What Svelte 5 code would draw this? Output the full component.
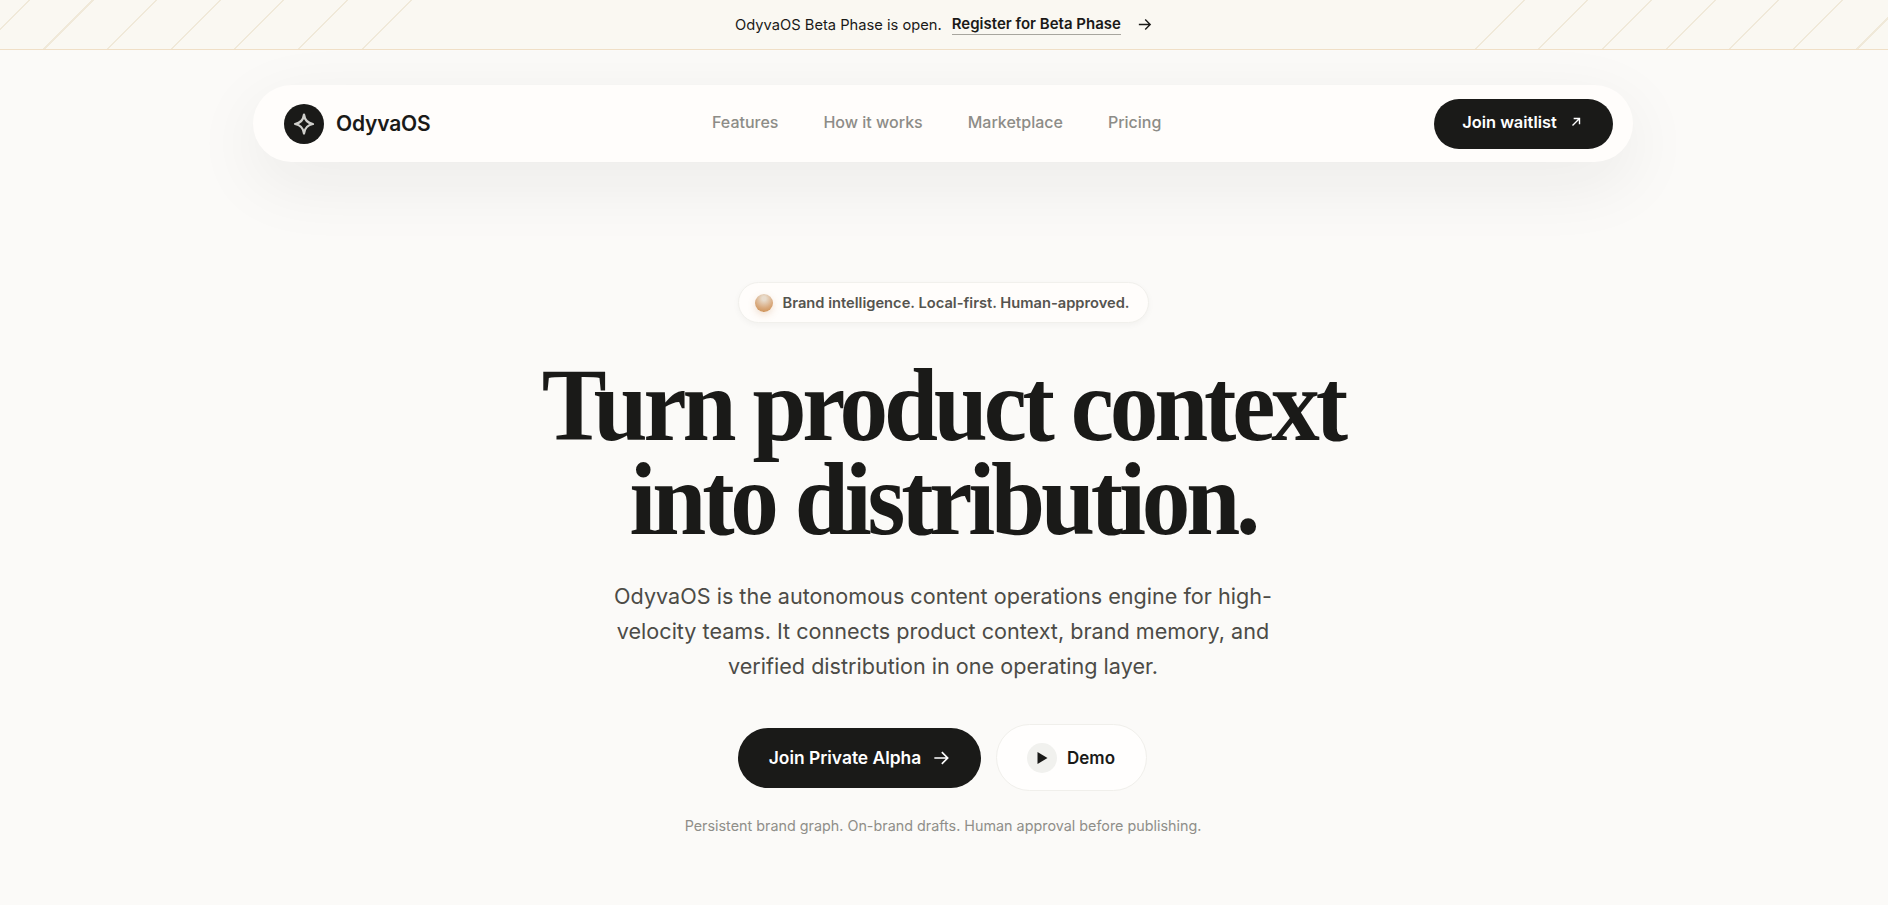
<script>
  const links = ['Features', 'How it works', 'Marketplace', 'Pricing'];
</script>

<div class="page">
  <div class="banner">
    <span>OdyvaOS Beta Phase is open.</span>
    <a href="#register" class="register">Register for Beta Phase</a>
    <svg class="banner-arrow" width="17" height="17" viewBox="0 0 24 24" fill="none" stroke="currentColor" stroke-width="2"><path d="M4 12h16M13 5l7 7-7 7" /></svg>
  </div>

  <header class="nav">
    <div class="brand">
      <span class="logo">
        <svg width="24" height="24" viewBox="0 0 24 24" fill="none" stroke="#cfcfcb" stroke-width="2.200" stroke-linejoin="round"><path d="M12 2.500c.7 5.600 3.300 8.600 9 9.500-5.700.9-8.300 3.900-9 9.500-.7-5.600-3.300-8.600-9-9.500 5.700-.9 8.300-3.900 9-9.500z" /></svg>
      </span>
      <span class="brand-name">OdyvaOS</span>
    </div>
    <nav class="links">
      {#each links as link}
        <a href="#top">{link}</a>
      {/each}
    </nav>
    <a href="#join" class="waitlist">
      Join waitlist
      <svg width="14" height="14" viewBox="0 0 24 24" fill="none" stroke="currentColor" stroke-width="2.400"><path d="M6 18L18 6M8 6h10v10" /></svg>
    </a>
  </header>

  <main class="hero">
    <div class="badge">
      <span class="orb"></span>
      Brand intelligence. Local-first. Human-approved.
    </div>
    <h1><span>Turn product context</span><span>into distribution.</span></h1>
    <p class="lead">OdyvaOS is the autonomous content operations engine for high-velocity teams. It connects product context, brand memory, and verified distribution in one operating layer.</p>
    <div class="actions">
      <a href="#alpha" class="primary">
        Join Private Alpha
        <svg width="20" height="20" viewBox="0 0 24 24" fill="none" stroke="currentColor" stroke-width="2"><path d="M4 12h16M13 5l7 7-7 7" /></svg>
      </a>
      <a href="#demo" class="demo">
        <span class="play"><svg width="14" height="14" viewBox="0 0 14 14"><path d="M2.500 1v12l10-6z" fill="#1a1a18" /></svg></span>
        Demo
      </a>
    </div>
    <p class="note">Persistent brand graph. On-brand drafts. Human approval before publishing.</p>
  </main>
</div>

<style>
  :global(body) {
    background: #fbfaf8;
    font-family: Inter, "Liberation Sans", sans-serif;
    color: #1a1a18;
  }

  a {
    color: inherit;
    text-decoration: none;
  }

  .page {
    min-height: 905px;
    overflow: hidden;
    padding-right: 2px;
    box-sizing: border-box;
  }

  .banner {
    position: relative;
    height: 49px;
    margin-right: -2px;
    border-bottom: 1px solid #f0dfc6;
    background: #faf8f2;
    display: flex;
    align-items: center;
    justify-content: center;
    font-size: 14.700px;
  }

  /* diagonal lines at both ends of the bar */
  .banner::before,
  .banner::after {
    content: '';
    position: absolute;
    top: 0;
    bottom: 0;
    width: 420px;
  }

  .banner::before {
    left: 0;
    background: repeating-linear-gradient(135deg, transparent 0 20px, #f0e9d9 20px 21.500px, transparent 21.500px 45px);
  }

  .banner::after {
    right: 0;
    background: repeating-linear-gradient(135deg, transparent 0 39px, #f0e9d9 39px 40.500px, transparent 40.500px 45px);
  }

  .register {
    margin-left: 10px;
    font-weight: 600;
    font-size: 15px;
    padding-bottom: 1px;
    border-bottom: 1px solid #a8a69f;
  }

  .banner-arrow {
    margin-left: 15px;
  }

  .nav {
    width: 1380px;
    height: 77px;
    box-sizing: border-box;
    margin: 35px auto 0;
    padding: 0 20px 0 31px;
    border-radius: 39px;
    background: #fffdfb;
    box-shadow: 0 20px 70px rgba(26, 26, 24, 0.07);
    display: flex;
    justify-content: space-between;
    align-items: center;
  }

  .brand {
    display: flex;
    align-items: center;
    gap: 12px;
  }

  .logo {
    width: 40px;
    height: 40px;
    border-radius: 50%;
    background: #1a1a18;
    display: flex;
    align-items: center;
    justify-content: center;
  }

  .brand-name {
    font-size: 21px;
    font-weight: 600;
    letter-spacing: -0.2px;
  }

  .links {
    display: flex;
    gap: 45px;
    margin: -3px 0 0 9px;
    font-size: 16px;
    font-weight: 500;
    color: #8d8c87;
  }

  .waitlist {
    width: 179px;
    height: 50px;
    border-radius: 25px;
    background: #1a1a18;
    color: #fff;
    font-size: 16.400px;
    font-weight: 600;
    display: flex;
    align-items: center;
    justify-content: center;
    gap: 12px;
    padding: 0 2px 3px 0;
    box-sizing: border-box;
  }

  .hero {
    display: flex;
    flex-direction: column;
    align-items: center;
  }

  .badge {
    margin-top: 120px;
    height: 41px;
    box-sizing: border-box;
    width: 411px;
    padding-left: 16px;
    border: 1px solid #f1f0ec;
    border-radius: 21px;
    background: #fffdfb;
    box-shadow: 0 2px 6px rgba(26, 26, 24, 0.04);
    display: flex;
    align-items: center;
    gap: 10px;
    font-size: 14.700px;
    font-weight: 600;
    color: #55544f;
  }

  .orb {
    width: 18px;
    height: 18px;
    border-radius: 50%;
    background: radial-gradient(circle at 50% 25%, #e8dccd 0 12%, #d9aa7e 58%, #c98745);
    box-shadow: 0 3px 7px rgba(200, 140, 90, 0.25);
  }

  h1 {
    margin: 35px 0 0;
    font-family: "Liberation Serif", serif;
    font-size: 104px;
    line-height: 94px;
    font-weight: 700;
    letter-spacing: -4.500px;
    text-align: center;
    color: #1a1a18;
    transform: scaleX(0.935);
  }

  h1 span {
    display: block;
  }

  .lead {
    width: 680px;
    margin: 33px 0 0;
    font-size: 21.600px;
    line-height: 35px;
    text-align: center;
    color: #4c4b46;
  }

  .actions {
    margin: 40px 2px 0 0;
    display: flex;
    align-items: center;
    gap: 15px;
  }

  .primary {
    width: 243px;
    height: 60px;
    border-radius: 30px;
    background: #1a1a18;
    color: #fff;
    font-size: 17.400px;
    font-weight: 600;
    display: flex;
    align-items: center;
    justify-content: center;
    gap: 10px;
    padding-left: 2px;
    box-sizing: border-box;
  }

  .demo {
    width: 151px;
    height: 67px;
    box-sizing: border-box;
    border: 1px solid #f0efeb;
    border-radius: 34px;
    background: #fffefd;
    font-size: 17px;
    font-weight: 600;
    display: flex;
    align-items: center;
    justify-content: center;
    gap: 10px;
  }

  .play {
    width: 30px;
    height: 30px;
    border-radius: 50%;
    background: #f1f1ee;
    display: flex;
    align-items: center;
    justify-content: center;
  }

  .note {
    margin: 26px 0 0;
    font-size: 14.350px;
    color: #8f8e89;
  }
</style>
